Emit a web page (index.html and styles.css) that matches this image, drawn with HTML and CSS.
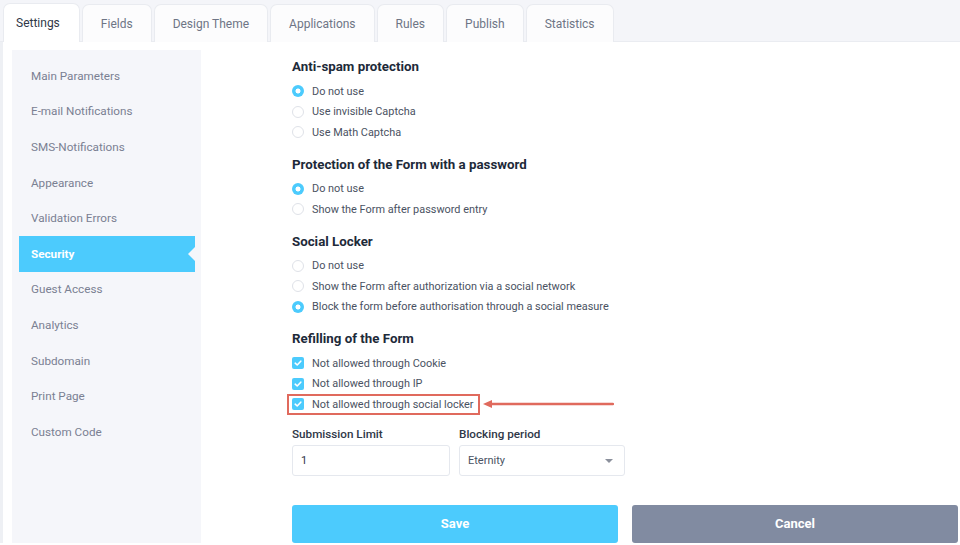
FILE: index.html
```html
<!DOCTYPE html>
<html>
<head>
<meta charset="utf-8">
<link rel="stylesheet" href="styles.css">
</head>
<body>
<div class="tabs">
  <div class="tab active">Settings</div>
  <div class="tab">Fields</div>
  <div class="tab">Design Theme</div>
  <div class="tab">Applications</div>
  <div class="tab">Rules</div>
  <div class="tab">Publish</div>
  <div class="tab">Statistics</div>
</div>
<div class="page">
  <nav class="sidebar">
    <div class="item">Main Parameters</div>
    <div class="item">E-mail Notifications</div>
    <div class="item">SMS-Notifications</div>
    <div class="item">Appearance</div>
    <div class="item">Validation Errors</div>
    <div class="item active">Security</div>
    <div class="item">Guest Access</div>
    <div class="item">Analytics</div>
    <div class="item">Subdomain</div>
    <div class="item">Print Page</div>
    <div class="item">Custom Code</div>
  </nav>
  <main class="content">
    <section class="group">
      <h3>Anti-spam protection</h3>
      <div class="opt"><span class="radio on"></span>Do not use</div>
      <div class="opt"><span class="radio"></span>Use invisible Captcha</div>
      <div class="opt"><span class="radio"></span>Use Math Captcha</div>
    </section>
    <section class="group">
      <h3>Protection of the Form with a password</h3>
      <div class="opt"><span class="radio on"></span>Do not use</div>
      <div class="opt"><span class="radio"></span>Show the Form after password entry</div>
    </section>
    <section class="group">
      <h3>Social Locker</h3>
      <div class="opt"><span class="radio"></span>Do not use</div>
      <div class="opt"><span class="radio"></span>Show the Form after authorization via a social network</div>
      <div class="opt"><span class="radio on"></span>Block the form before authorisation through a social measure</div>
    </section>
    <section class="group refill">
      <h3>Refilling of the Form</h3>
      <div class="opt"><span class="check"><svg viewBox="0 0 12 12" width="12" height="12"><path d="M3.2 6.2 L5.2 8 L8.8 4.2" fill="none" stroke="#fff" stroke-width="1.6" stroke-linecap="round" stroke-linejoin="round"/></svg></span>Not allowed through Cookie</div>
      <div class="opt"><span class="check"><svg viewBox="0 0 12 12" width="12" height="12"><path d="M3.2 6.2 L5.2 8 L8.8 4.2" fill="none" stroke="#fff" stroke-width="1.6" stroke-linecap="round" stroke-linejoin="round"/></svg></span>Not allowed through IP</div>
      <div class="opt highlight-row">
        <span class="highlight"><span class="check"><svg viewBox="0 0 12 12" width="12" height="12"><path d="M3.2 6.2 L5.2 8 L8.8 4.2" fill="none" stroke="#fff" stroke-width="1.6" stroke-linecap="round" stroke-linejoin="round"/></svg></span>Not allowed through social locker</span>
        <svg class="arrow" width="132" height="10" viewBox="0 0 132 10"><path d="M131 5 H8" stroke="#e06a5d" stroke-width="2.5" stroke-linecap="round"/><path d="M1 5 L10 1 L10 9 Z" fill="#e06a5d"/></svg>
      </div>
    </section>
    <div class="fields">
      <div class="field limit">
        <label>Submission Limit</label>
        <div class="input">1</div>
      </div>
      <div class="field period">
        <label>Blocking period</label>
        <div class="input select">Eternity<span class="caret"></span></div>
      </div>
    </div>
    <div class="buttons">
      <div class="btn save">Save</div>
      <div class="btn cancel">Cancel</div>
    </div>
  </main>
</div>
</body>
</html>
```
FILE: styles.css
```css
* { box-sizing: border-box; }
html, body { margin: 0; padding: 0; }
body {
  width: 960px;
  height: 545px;
  overflow: hidden;
  background: #ffffff;
  font-family: Roboto, "Liberation Sans", sans-serif;
  color: #4a5262;
}
.tabs {
  height: 42px;
  background: #f4f5f9;
  border-bottom: 1px solid #eaecf1;
  display: flex;
  align-items: flex-end;
  padding-left: 3px;
  gap: 2px;
}
.tab {
  height: 38px;
  padding: 0 18px;
  display: flex;
  align-items: center;
  font-size: 12px;
  color: #6e7585;
  background: #fcfcfd;
  border: 1px solid #e9ebf0;
  border-bottom: none;
  border-radius: 7px 7px 0 0;
  margin-bottom: -1px;
}
.tab.active {
  background: #ffffff;
  color: #2f3747;
  padding: 0 19px 0 12px;
  height: 39px;
}
.page {
  display: flex;
  height: 501px;
  border-left: 3px solid #eef0f4;
}
.sidebar {
  width: 189px;
  margin: 8px 0 0 9px;
  background: #f5f6fa;
  padding: 8px 6px 0 7px;
}
.sidebar .item {
  height: 35.6px;
  display: flex;
  align-items: center;
  padding-left: 12px;
  font-size: 11.7px;
  color: #7a8092;
  position: relative;
}
.sidebar .item.active {
  background: #4ccbfd;
  color: #ffffff;
  font-weight: 700;
}
.sidebar .item.active::after {
  content: "";
  position: absolute;
  right: 0;
  top: 50%;
  margin-top: -7px;
  border-style: solid;
  border-width: 7px 7px 7px 0;
  border-color: transparent #f5f6fa transparent transparent;
}
.content {
  flex: 1;
  padding: 16px 2px 0 91px;
}
.group { margin-bottom: 13px; }
.group h3 {
  margin: 0 0 5px;
  font-size: 13.3px;
  line-height: 18px;
  font-weight: 700;
  color: #1d2a39;
}
.opt {
  height: 20.5px;
  display: flex;
  align-items: center;
  font-size: 10.9px;
  color: #4a5262;
}
.refill { margin-bottom: 11px; }
.refill h3 { margin-bottom: 5px; }
.radio {
  width: 12px;
  height: 12px;
  border-radius: 50%;
  border: 1px solid #dfe2e8;
  background: #fff;
  margin-right: 8px;
  flex: none;
}
.radio.on {
  border: none;
  background: radial-gradient(circle, #ffffff 0 2.2px, #4ccbfd 2.8px);
}
.check {
  width: 12px;
  height: 12px;
  border-radius: 2px;
  background: #4ccbfd;
  margin-right: 8px;
  flex: none;
  display: flex;
}
.highlight-row { position: relative; }
.highlight {
  display: flex;
  align-items: center;
  height: 21px;
  margin-left: -5px;
  padding: 0 4px 0 3px;
  border: 2px solid #e06a5d;
}
.arrow { margin-left: 2px; }
.fields {
  display: flex;
  gap: 9px;
}
.field label {
  display: block;
  font-size: 11.7px;
  line-height: 16px;
  font-weight: 500;
  color: #2f3747;
  margin-bottom: 3px;
}
.limit { width: 158px; }
.period { width: 166px; }
.input {
  height: 31px;
  border: 1px solid #e5e8ee;
  border-radius: 3px;
  display: flex;
  align-items: center;
  padding-left: 8px;
  font-size: 11px;
  color: #2f3747;
  position: relative;
}
.select { color: #4a5262; }
.caret {
  position: absolute;
  right: 11px;
  top: 13px;
  border-style: solid;
  border-width: 4px 4px 0 4px;
  border-color: #8b909c transparent transparent transparent;
}
.buttons {
  display: flex;
  gap: 14px;
  margin-top: 29px;
}
.btn {
  flex: 1;
  height: 38px;
  border-radius: 3px;
  display: flex;
  align-items: center;
  justify-content: center;
  color: #fff;
  font-weight: 700;
  font-size: 13px;
}
.save { background: #4ccbfd; }
.cancel { background: #818ba1; }
```
